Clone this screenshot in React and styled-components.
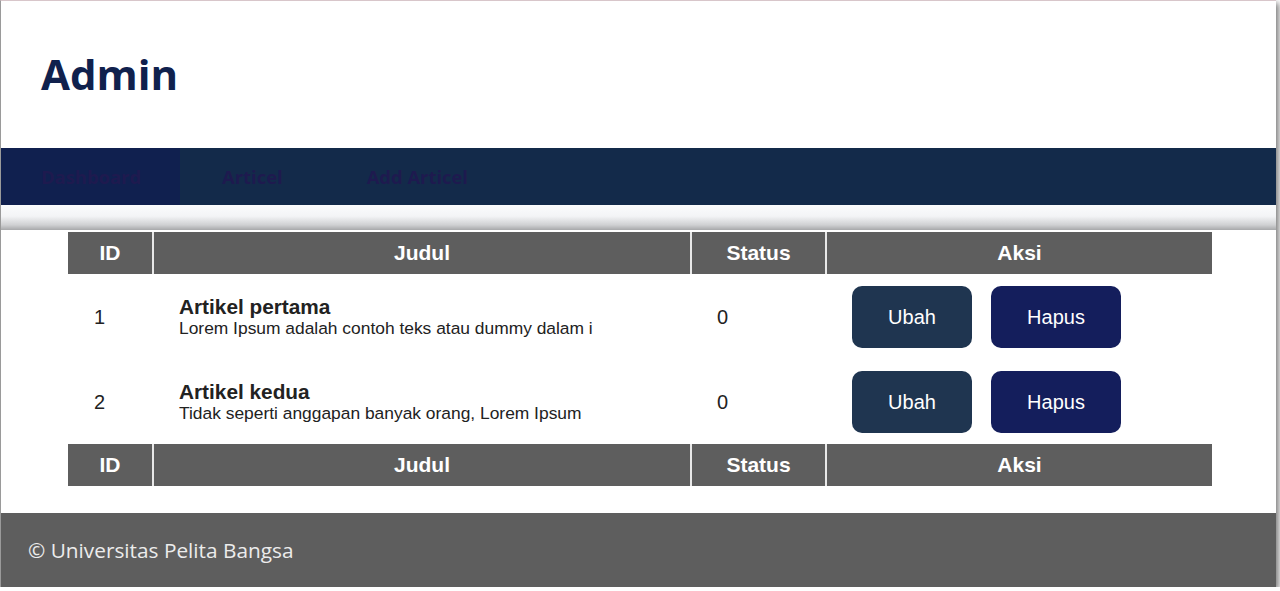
import React from 'react'
import styled, { createGlobalStyle } from 'styled-components'

const GlobalStyle = createGlobalStyle`
  html, body {
    margin: 0;
    padding: 0;
    background: #fff;
  }
  body {
    font-family: "Liberation Sans", Arial, sans-serif;
  }
`

const Page = styled.div`
  width: 1275px;
  border-left: 1px solid #9a9a9a;
  border-top: 1px solid #d8c6ca;
  box-shadow: 3px 3px 6px rgba(0, 0, 0, 0.5);
  background: #fff;
`

const Header = styled.header`
  height: 147px;
  display: flex;
  align-items: center;
  padding-left: 40px;
`

const Title = styled.h1`
  margin: 0;
  font-family: "Open Sans", sans-serif;
  font-weight: 700;
  font-size: 42px;
  color: #10214d;
  padding-bottom: 2px;
`

const Nav = styled.nav`
  display: flex;
  height: 57px;
  background: #132a4a;
`

const NavItem = styled.a`
  display: flex;
  align-items: center;
  padding: ${props => props.first ? '0 39px 0 40px' : '0 42px'};
  font-family: "Open Sans", sans-serif;
  font-weight: 700;
  font-size: 18.4px;
  color: #1e1a4f;
  text-decoration: none;
  background: ${props => props.active ? '#10204f' : 'transparent'};
`

const Shade = styled.div`
  height: 25px;
  background: linear-gradient(#fbfcfd 0%, #f3f4f6 45%, #cfd0d2 80%, #a7a8aa 100%);
`

const Main = styled.main`
  padding: 2px 63px 27px 67px;
`

const Table = styled.table`
  width: 1144px;
  border-collapse: collapse;
  table-layout: fixed;
`

const Th = styled.th`
  height: 42px;
  padding: 0;
  background: #5e5e5e;
  color: #fff;
  font-size: 21px;
  font-weight: 700;
  text-align: center;
  border-right: 2px solid #e8e8e8;
  &:last-child {
    border-right: none;
  }
`

const Td = styled.td`
  padding: 12px 0 11px 26px;
  font-size: 20px;
  color: #222;
  vertical-align: middle;
`

const ArticleTitle = styled.div`
  font-size: 20.8px;
  font-weight: 700;
  line-height: 22px;
  color: #222;
`

const ArticleText = styled.div`
  font-size: 17.4px;
  line-height: 20px;
  color: #222;
`

const Actions = styled.div`
  display: flex;
  gap: 19px;
`

const Button = styled.button`
  width: ${props => props.wide ? '130px' : '120px'};
  height: 62px;
  border: none;
  border-radius: 10px;
  background: ${props => props.danger ? '#141e5c' : '#1f3550'};
  color: #fff;
  font-family: "Liberation Sans", Arial, sans-serif;
  font-size: 20px;
  cursor: pointer;
`

const Footer = styled.footer`
  height: 74px;
  display: flex;
  align-items: center;
  padding-left: 27px;
  background: #5e5e5e;
  font-family: "Open Sans", sans-serif;
  font-size: 20.8px;
  color: #ececec;
`

const columns = [
  { label: 'ID', width: 85 },
  { label: 'Judul', width: 538 },
  { label: 'Status', width: 135 },
  { label: 'Aksi', width: 386 },
]

const articles = [
  { id: 1, title: 'Artikel pertama', text: 'Lorem Ipsum adalah contoh teks atau dummy dalam i', status: 0 },
  { id: 2, title: 'Artikel kedua', text: 'Tidak seperti anggapan banyak orang, Lorem Ipsum', status: 0 },
]

const HeadRow = () => (
  <tr>
    {columns.map(col => <Th key={col.label}>{col.label}</Th>)}
  </tr>
)

export default function App() {
  return (
    <Page>
      <GlobalStyle />
      <Header>
        <Title>Admin</Title>
      </Header>
      <Nav>
        <NavItem href="#" active first>Dashboard</NavItem>
        <NavItem href="#">Articel</NavItem>
        <NavItem href="#">Add Articel</NavItem>
      </Nav>
      <Shade />
      <Main>
        <Table>
          <colgroup>
            {columns.map(col => <col key={col.label} style={{ width: col.width }} />)}
          </colgroup>
          <thead>
            <HeadRow />
          </thead>
          <tbody>
            {articles.map(a => (
              <tr key={a.id}>
                <Td>{a.id}</Td>
                <Td>
                  <ArticleTitle>{a.title}</ArticleTitle>
                  <ArticleText>{a.text}</ArticleText>
                </Td>
                <Td>{a.status}</Td>
                <Td>
                  <Actions>
                    <Button>Ubah</Button>
                    <Button wide danger>Hapus</Button>
                  </Actions>
                </Td>
              </tr>
            ))}
          </tbody>
          <tfoot>
            <HeadRow />
          </tfoot>
        </Table>
      </Main>
      <Footer>© Universitas Pelita Bangsa</Footer>
    </Page>
  )
}
